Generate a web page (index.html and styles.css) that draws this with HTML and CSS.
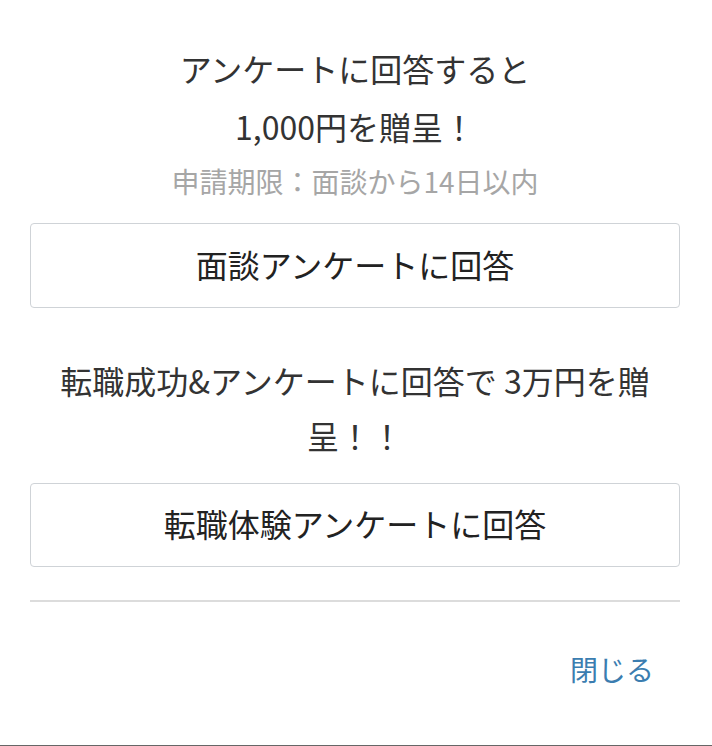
FILE: index.html
```html
<!DOCTYPE html>
<html lang="ja">
<head>
<meta charset="utf-8">
<link rel="stylesheet" href="styles.css">
</head>
<body>
<div class="modal">
  <div class="section">
    <p class="title">アンケートに回答すると<br>1,000円を贈呈！</p>
    <p class="note">申請期限：面談から14日以内</p>
    <a class="answer-btn">面談アンケートに回答</a>
  </div>
  <div class="section second">
    <p class="title title-2">転職成功&amp;アンケートに回答で 3万円を贈呈！！</p>
    <a class="answer-btn">転職体験アンケートに回答</a>
  </div>
  <div class="footer">
    <a class="close">閉じる</a>
  </div>
</div>
</body>
</html>
```

FILE: styles.css
```css
html, body {
  margin: 0;
  padding: 0;
  background: #fff;
  height: 100%;
}
body {
  font-family: "Noto Sans CJK JP", "Noto Sans", sans-serif;
  color: #333;
}
.modal {
  box-sizing: border-box;
  height: 746px;
  padding: 39px 32px 0 30px;
  border-bottom: 1px solid #666;
  display: flex;
  flex-direction: column;
}
.section {
  display: flex;
  flex-direction: column;
}
.title {
  margin: 0;
  text-align: center;
  font-size: 32px;
  line-height: 58px;
  color: #333;
}
.title-2 {
  line-height: 55px;
}
.note {
  margin: 5px 0 0;
  text-align: center;
  font-size: 28px;
  line-height: 42px;
  color: #a6a6a6;
}
.answer-btn {
  display: flex;
  align-items: center;
  justify-content: center;
  box-sizing: border-box;
  height: 85px;
  margin-top: 21px;
  padding-bottom: 4px;
  border: 1.5px solid #cfd3d7;
  border-radius: 4px;
  font-size: 32px;
  color: #222;
}
.second {
  margin-top: 45px;
}
.second .answer-btn {
  margin-top: 20px;
  height: 84px;
}
.footer {
  margin-top: 33px;
  border-top: 2px solid #dcdcdc;
  display: flex;
  justify-content: flex-end;
  padding: 47px 26px 0 0;
}
.close {
  font-size: 28px;
  line-height: 40px;
  color: #3b7db0;
}
```
